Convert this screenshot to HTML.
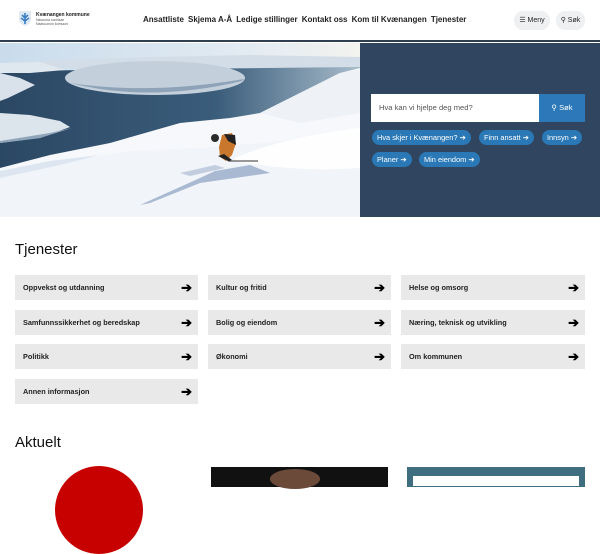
<!DOCTYPE html>
<html><head><style>
*{margin:0;padding:0;box-sizing:border-box}
body{width:600px;height:480px;overflow:hidden;background:#fff;font-family:"Liberation Sans",sans-serif;color:#1a1a1a;position:relative}
.hdr{position:absolute;left:0;top:0;width:600px;height:42px;background:#fff;border-bottom:2px solid #2f3f50}
.nav{position:absolute;top:15px;left:143px;font-size:8px;font-weight:bold;color:#222;white-space:nowrap}
.nav span{margin-right:4.1px}
.btn{position:absolute;top:11px;height:19px;background:#eef0f2;border-radius:9px;font-size:7px;line-height:19px;text-align:center;color:#222}
.hero{position:absolute;top:43px;left:0;width:360px;height:174px;overflow:hidden}
.panel{position:absolute;top:43px;left:360px;width:240px;height:174px;background:#2f4560}
.search{position:absolute;left:371px;top:94px;width:168px;height:28px;background:#fff;font-size:7.6px;color:#555;line-height:28px;padding-left:8px}
.sbtn{position:absolute;left:539px;top:94px;width:46px;height:28px;background:#2c78b8;color:#fff;font-size:7.6px;line-height:28px;text-align:center}
.pill{position:absolute;height:15px;background:#2a78b6;color:#fff;border-radius:8px;font-size:7.4px;line-height:15px;padding:0 5px;white-space:nowrap}
h2{position:absolute;left:15px;font-size:15px;font-weight:normal;color:#111}
.tile{position:absolute;width:183px;height:25px;background:#e9e9e9;font-size:7.3px;font-weight:bold;line-height:25px;padding-left:8px;color:#222}
.tile b{position:absolute;right:6px;top:0;font-size:13px;color:#000}
</style></head><body>
<div class="hdr">
 <svg style="position:absolute;left:18px;top:10px" width="14" height="17" viewBox="0 0 14 17"><path d="M1 1 H13 V9 Q13 14 7 16 Q1 14 1 9Z" fill="#dfe9f4"/><path d="M7 3 L7 14 M4 5 L7 8 L10 5 M3 8 L7 11 L11 8" stroke="#3a7fc4" stroke-width="1.6" fill="none"/></svg>
 <div style="position:absolute;left:36px;top:12px;font-size:5px;font-weight:bold">Kvænangen kommune</div>
 <div style="position:absolute;left:36px;top:18px;font-size:3.5px;color:#555;line-height:4px">Návuona suohkan<br>Naavuonon komuuni</div>
 <div class="nav"><span>Ansattliste</span><span>Skjema A-Å</span><span>Ledige stillinger</span><span>Kontakt oss</span><span>Kom til Kvænangen</span><span>Tjenester</span></div>
 <div class="btn" style="left:514px;width:36px">☰ Meny</div>
 <div class="btn" style="left:556px;width:29px">⚲ Søk</div>
</div>
<div class="hero">
<svg width="360" height="175" viewBox="0 0 360 175">
 <defs>
  <linearGradient id="sky" x1="0" y1="0" x2="1" y2="0"><stop offset="0" stop-color="#c9dcec"/><stop offset="0.7" stop-color="#e3ebf2"/><stop offset="1" stop-color="#f3f3ef"/></linearGradient>
  <linearGradient id="wat" x1="0" y1="0" x2="1" y2="0"><stop offset="0" stop-color="#2b4763"/><stop offset="0.6" stop-color="#3a5d7b"/><stop offset="1" stop-color="#a9bccb"/></linearGradient>
 </defs>
 <rect width="360" height="175" fill="url(#sky)"/>
 <path d="M0 20 L60 17 L150 14 L250 12 L360 14 L360 25 L0 25Z" fill="#d3dde7"/>
 <path d="M0 28 L360 24 L360 60 L0 130Z" fill="url(#wat)"/>
 <path d="M0 20 L40 19 L65 27 L30 30 L0 30Z" fill="#dfe7ef"/>
 <ellipse cx="155" cy="35" rx="90" ry="17" fill="#c3cfdb"/>
 <path d="M70 40 Q150 60 242 38 L244 36 Q150 52 70 40Z" fill="#8ea3b8"/>
 <path d="M0 30 L20 35 L35 42 L8 55 L0 58Z" fill="#d9e2eb"/>
 <path d="M0 70 L30 72 L60 78 L70 84 L40 95 L0 100Z" fill="#dce4ec"/>
 <path d="M0 100 L40 95 L72 85 L50 90 L0 98Z" fill="#8fa5ba"/>
 <path d="M0 125 L50 112 L110 100 L180 80 L230 75 L260 70 L300 50 L340 30 L360 25 L360 175 L0 175Z" fill="#f6f8fb"/>
 <path d="M0 175 L0 135 L60 120 L130 108 L200 105 L260 100 L360 90 L360 175Z" fill="#f1f4f8"/>
 <path d="M0 135 L60 122 L100 112 L50 118 L0 128Z" fill="#dde6f0"/>
 <path d="M260 70 L300 50 L340 30 L360 26 L360 70 L300 80Z" fill="#eef2f7"/>
 <path d="M235 115 Q280 95 360 85 L360 125 Q300 130 235 118Z" fill="#ffffff" opacity="0.9"/>
 <path d="M140 162 L200 135 L215 128 L250 122 L270 130 L200 140 L150 160Z" fill="#a9b9d2"/>
 <path d="M180 130 L215 122 L225 125 L190 133Z" fill="#c2cee0"/>
 <path d="M222 92 L232 90 L236 100 L232 112 L226 118 L220 114 L219 104Z" fill="#c8772c"/>
 <path d="M224 91 L235 92 L236 102 L228 98Z" fill="#222"/>
 <circle cx="215" cy="95" r="4" fill="#2b2b2b"/>
 <path d="M218 113 L228 118 L232 117 L224 111Z" fill="#222"/>
 <path d="M228 118 L258 118" stroke="#333" stroke-width="1"/>
</svg>
</div>
<div class="panel"></div>
<div class="search">Hva kan vi hjelpe deg med?</div>
<div class="sbtn">⚲ Søk</div>
<div class="pill" style="left:372px;top:130px">Hva skjer i Kvænangen? ➔</div>
<div class="pill" style="left:479px;top:130px">Finn ansatt ➔</div>
<div class="pill" style="left:542px;top:130px">Innsyn ➔</div>
<div class="pill" style="left:372px;top:152px">Planer ➔</div>
<div class="pill" style="left:419px;top:152px">Min eiendom ➔</div>
<h2 style="top:241px">Tjenester</h2>
<div class="tile" style="left:15px;top:275px">Oppvekst og utdanning<b>➔</b></div>
<div class="tile" style="left:208px;top:275px">Kultur og fritid<b>➔</b></div>
<div class="tile" style="left:401px;top:275px;width:184px">Helse og omsorg<b>➔</b></div>
<div class="tile" style="left:15px;top:310px">Samfunnssikkerhet og beredskap<b>➔</b></div>
<div class="tile" style="left:208px;top:310px">Bolig og eiendom<b>➔</b></div>
<div class="tile" style="left:401px;top:310px;width:184px">Næring, teknisk og utvikling<b>➔</b></div>
<div class="tile" style="left:15px;top:344px">Politikk<b>➔</b></div>
<div class="tile" style="left:208px;top:344px">Økonomi<b>➔</b></div>
<div class="tile" style="left:401px;top:344px;width:184px">Om kommunen<b>➔</b></div>
<div class="tile" style="left:15px;top:379px">Annen informasjon<b>➔</b></div>
<h2 style="top:434px">Aktuelt</h2>
<div style="position:absolute;left:55px;top:466px;width:88px;height:88px;border-radius:50%;background:#c70000"></div>
<div style="position:absolute;left:211px;top:467px;width:177px;height:20px;background:#111"></div>
<div style="position:absolute;left:270px;top:469px;width:50px;height:20px;border-radius:50%;background:#6b4a3a"></div>
<div style="position:absolute;left:407px;top:467px;width:178px;height:20px;background:#3f6e80"></div>
<div style="position:absolute;left:413px;top:476px;width:166px;height:10px;background:#fff"></div>
</body></html>
